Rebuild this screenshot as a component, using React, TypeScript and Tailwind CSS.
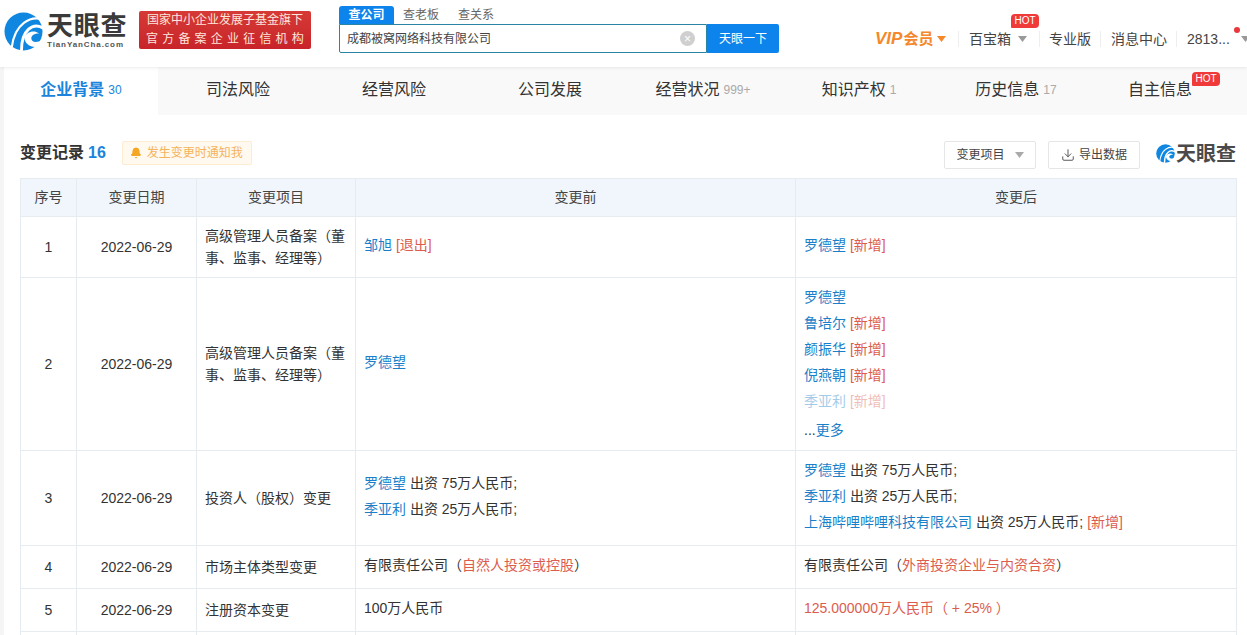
import React from "react";
import { Bell, Download } from "lucide-react";

const FONT = "[font-family:'Liberation_Sans','Noto_Sans_CJK_SC',sans-serif]";

function Logo({ size }: { size: number }) {
  return (
    <svg width={size} height={size} viewBox="0 0 40 40" className="flex-none">
      <circle cx="20" cy="20" r="19.5" fill="#0f87e0" />
      <path d="M41 8 C27 3 11 12 8 36" fill="none" stroke="#fff" strokeWidth="2.2" />
      <path d="M41 17 C30 10 17 18 18 42" fill="none" stroke="#fff" strokeWidth="3" />
      <path d="M21 26 C23 20 31 18 36 22 C31 22 28 24 28 27 C28 31 33 32 39 29 L41 33 L32 36 C26 36 21 32 21 26 Z" fill="#fff" />
    </svg>
  );
}

function Caret({ color = "#999", className = "" }: { color?: string; className?: string }) {
  return (
    <svg width="9" height="6" viewBox="0 0 9 6" className={"flex-none " + className}>
      <polygon points="0,0 9,0 4.5,6" fill={color} />
    </svg>
  );
}

function Hot({ className }: { className: string }) {
  return (
    <span className={"absolute flex h-[14px] w-[28px] items-center justify-center rounded-t-[4px] rounded-br-[4px] rounded-bl-[1px] bg-[#f03a3a] text-[10px] leading-none text-white " + className}>
      HOT
    </span>
  );
}

function Sep() {
  return <span className="block h-[16px] w-px flex-none bg-[#eeeeee]" />;
}

function Header() {
  return (
    <header className="relative z-10 flex h-[67px] w-full items-start overflow-hidden bg-white shadow-[0_1px_3px_rgba(0,0,0,0.08)]">
      <div className="ml-1 mt-3 flex w-[127px] flex-none items-center">
        <Logo size={39} />
        <div className="ml-[4px] flex flex-col">
          <span className="text-[26px] font-bold leading-[27px] tracking-[0.7px] text-[#3a3a3a]">天眼查</span>
          <span className="text-[8px] font-bold leading-[10px] tracking-[0.9px] text-[#555]">TianYanCha.com</span>
        </div>
      </div>
      <div className="ml-2 mt-[11px] flex h-[38px] w-[172px] flex-none flex-col items-center justify-center rounded-[2px] bg-gradient-to-b from-[#d63a36] to-[#c8232a] text-[12px] leading-[19px] text-[#fde6dc]">
        <span>国家中小企业发展子基金旗下</span>
        <span className="tracking-[4.2px] pl-1">官方备案企业征信机构</span>
      </div>
      <div className="ml-7 mt-[6px] flex w-[440px] flex-none flex-col">
        <div className="flex h-[18px] items-end text-[12px]">
          <span className="flex h-[18px] w-[55px] items-center justify-center rounded-t-[3px] bg-[#0d84ec] font-bold text-white">查公司</span>
          <span className="ml-[9px] leading-[18px] text-[#666]">查老板</span>
          <span className="ml-[19px] leading-[18px] text-[#666]">查关系</span>
        </div>
        <div className="flex h-[29px]">
          <div className="flex w-[368px] items-center rounded-bl-[2px] border border-[#2a84a6] pl-[7px] pr-[11px] text-[12px] text-[#444]">
            <span>成都被窝网络科技有限公司</span>
            <span className="ml-auto flex h-[15px] w-[15px] items-center justify-center rounded-full bg-[#cfcfcf] text-[12px] leading-none text-white">×</span>
          </div>
          <button className="h-[29px] w-[72px] rounded-r-[2px] bg-[#0d84ec] text-[12px] text-white">天眼一下</button>
        </div>
      </div>
      <div className="ml-[96px] mt-[30px] flex h-[18px] flex-none items-center text-[14px] text-[#444]">
        <span className="flex w-[72px] items-center font-bold text-[#f5882a]">
          <span className="text-[17px] italic">VIP</span>
          <span className="ml-[1px] text-[15px]">会员</span>
          <Caret color="#f5882a" className="ml-[4px]" />
        </span>
        <span className="ml-[11px]"><Sep /></span>
        <span className="relative ml-[10px] flex items-center">
          百宝箱
          <Caret className="ml-[7px]" />
          <Hot className="-top-[15px] left-[42px]" />
        </span>
        <span className="ml-[12px]"><Sep /></span>
        <span className="ml-[9px]">专业版</span>
        <span className="ml-[9px]"><Sep /></span>
        <span className="ml-[10px]">消息中心</span>
        <span className="ml-[9px]"><Sep /></span>
        <span className="relative ml-[10px] flex items-center">
          2813...
          <span className="absolute -top-[2px] left-[47px] h-[6px] w-[6px] rounded-full bg-[#e8383d]" />
          <Caret className="ml-[11px]" />
        </span>
      </div>
    </header>
  );
}

const tabs = [
  { label: "司法风险", count: "", w: "w-[160px]" },
  { label: "经营风险", count: "", w: "w-[152px]" },
  { label: "公司发展", count: "", w: "w-[160px]" },
  { label: "经营状况", count: "999+", w: "w-[146px]" },
  { label: "知识产权", count: "1", w: "w-[166px]" },
  { label: "历史信息", count: "17", w: "w-[148px]" },
];

function Tabs() {
  return (
    <nav className="flex h-[48px] w-full bg-[#f9f9f9] pb-[2px] text-[16px] text-[#333]">
      <div className="-mb-[2px] flex w-[154px] flex-none items-center justify-center bg-white pb-[2px] text-[#1a84dc]">
        <span className="font-bold">企业背景</span>
        <span className="ml-1 text-[12px]">30</span>
      </div>
      {tabs.map((t) => (
        <div key={t.label} className={"flex flex-none items-center justify-center " + t.w}>
          <span>{t.label}</span>
          {t.count && <span className="ml-1 text-[12px] text-[#aaa]">{t.count}</span>}
        </div>
      ))}
      <div className="flex w-[140px] flex-none items-center justify-center">
        <span className="relative">
          自主信息
          <Hot className="-top-[6px] left-[64px]" />
        </span>
      </div>
    </nav>
  );
}

function Name({ children }: { children: React.ReactNode }) {
  return <span className="text-[#1a7fc9]">{children}</span>;
}
function Red({ children }: { children: React.ReactNode }) {
  return <span className="text-[#dc5c4e]">{children}</span>;
}
function Line({ children, className = "" }: { children: React.ReactNode; className?: string }) {
  return <div className={"h-[26px] leading-[26px] " + className}>{children}</div>;
}

const C = "border border-[#e6ebf0] align-middle";
const N = C + " text-center";
const T = C + " px-2 leading-[22px]";
const V = C + " px-2 pb-[5px]";

function Table() {
  return (
    <table className="w-[1216px] table-fixed border-collapse text-[14px] text-[#333]">
      <colgroup>
        <col className="w-[56px]" />
        <col className="w-[120px]" />
        <col className="w-[159px]" />
        <col className="w-[440px]" />
        <col className="w-[441px]" />
      </colgroup>
      <thead>
        <tr className="h-[38px] bg-[#f0f6fb] text-[14px] text-[#444]">
          <th className={N + " font-normal"}>序号</th>
          <th className={N + " font-normal"}>变更日期</th>
          <th className={N + " font-normal"}>变更项目</th>
          <th className={N + " font-normal"}>变更前</th>
          <th className={N + " font-normal"}>变更后</th>
        </tr>
      </thead>
      <tbody>
        <tr className="h-[61px]">
          <td className={N}>1</td>
          <td className={N}>2022-06-29</td>
          <td className={T}>高级管理人员备案（董事、监事、经理等）</td>
          <td className={V}><Line><Name>邹旭</Name> <Red>[退出]</Red></Line></td>
          <td className={V}><Line><Name>罗德望</Name> <Red>[新增]</Red></Line></td>
        </tr>
        <tr className="h-[173px]">
          <td className={N}>2</td>
          <td className={N}>2022-06-29</td>
          <td className={T}>高级管理人员备案（董事、监事、经理等）</td>
          <td className={V}><Line><Name>罗德望</Name></Line></td>
          <td className={C + " px-2 pb-[2px]"}>
            <Line><Name>罗德望</Name></Line>
            <Line><Name>鲁培尔</Name> <Red>[新增]</Red></Line>
            <Line><Name>颜振华</Name> <Red>[新增]</Red></Line>
            <Line><Name>倪燕朝</Name> <Red>[新增]</Red></Line>
            <Line className="opacity-40"><Name>季亚利</Name> <Red>[新增]</Red></Line>
            <Line className="mt-[3px]">...<Name>更多</Name></Line>
          </td>
        </tr>
        <tr className="h-[95px]">
          <td className={N}>3</td>
          <td className={N}>2022-06-29</td>
          <td className={T}>投资人（股权）变更</td>
          <td className={V}>
            <Line><Name>罗德望</Name> 出资 75万人民币;</Line>
            <Line><Name>季亚利</Name> 出资 25万人民币;</Line>
          </td>
          <td className={V}>
            <Line><Name>罗德望</Name> 出资 75万人民币;</Line>
            <Line><Name>季亚利</Name> 出资 25万人民币;</Line>
            <Line><Name>上海哔哩哔哩科技有限公司</Name> 出资 25万人民币; <Red>[新增]</Red></Line>
          </td>
        </tr>
        <tr className="h-[43px]">
          <td className={N}>4</td>
          <td className={N}>2022-06-29</td>
          <td className={T}>市场主体类型变更</td>
          <td className={V}><Line>有限责任公司（<Red>自然人投资或控股</Red>）</Line></td>
          <td className={V}><Line>有限责任公司（<Red>外商投资企业与内资合资</Red>）</Line></td>
        </tr>
        <tr className="h-[43px]">
          <td className={N}>5</td>
          <td className={N}>2022-06-29</td>
          <td className={T}>注册资本变更</td>
          <td className={V}><Line>100万人民币</Line></td>
          <td className={V}><Line><Red>125.000000万人民币（ + 25% ）</Red></Line></td>
        </tr>
        <tr className="h-[43px]">
          <td className={N}></td>
          <td className={N}></td>
          <td className={T}></td>
          <td className={V}></td>
          <td className={V}></td>
        </tr>
      </tbody>
    </table>
  );
}

function Section() {
  return (
    <section className="bg-white pl-4 pt-[26px]">
      <div className="flex h-[37px] w-[1216px] items-start">
        <h2 className="mt-[1px] text-[16px] font-bold leading-[22px] text-[#333]">变更记录</h2>
        <span className="ml-1 mt-[1px] text-[16px] font-bold leading-[22px] text-[#1a84dc]">16</span>
        <span className="ml-[16px] flex h-[24px] w-[130px] items-center rounded-[2px] border border-[#fdeccf] bg-[#fff9ef] pl-[7px] text-[12px] text-[#f5b35b]">
          <Bell size={12} fill="#f5a623" stroke="#f5a623" className="flex-none" />
          <span className="ml-[5px]">发生变更时通知我</span>
        </span>
        <div className="ml-auto flex items-center">
          <button className="flex h-[28px] w-[92px] items-center justify-center rounded-[2px] border border-[#e6e6e6] text-[12px] text-[#444]">
            变更项目
            <Caret color="#aaa" className="ml-[10px]" />
          </button>
          <button className="ml-3 flex h-[28px] w-[92px] items-center justify-center rounded-[2px] border border-[#e6e6e6] text-[12px] text-[#444]">
            <Download size={14} strokeWidth={1.5} className="mr-[4px] flex-none" />
            导出数据
          </button>
          <div className="-mt-[3px] ml-4 flex w-[80px] items-center">
            <Logo size={19} />
            <span className="ml-[1px] text-[20px] font-bold leading-none text-[#4a4a4a]">天眼查</span>
          </div>
        </div>
      </div>
      <Table />
    </section>
  );
}

export default function App() {
  return (
    <div className={"h-[635px] w-full overflow-hidden bg-[#f5f5f5] " + FONT}>
      <Header />
      <main className="pl-1">
        <Tabs />
        <Section />
      </main>
    </div>
  );
}
